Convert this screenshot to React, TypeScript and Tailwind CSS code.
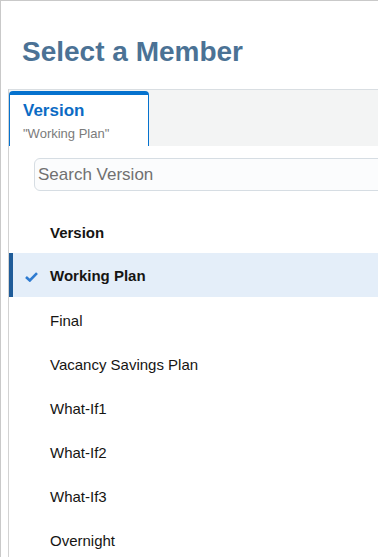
import React from "react";

const members = ["Final", "Vacancy Savings Plan", "What-If1", "What-If2", "What-If3", "Overnight"];

export default function App() {
  return (
    <div
      className="w-[378px] h-[557px] overflow-hidden bg-white border-t border-l border-[#c9c9c9] text-[#161513]"
      style={{ fontFamily: '"Liberation Sans", Arial, sans-serif' }}
    >
      {/* Title */}
      <h1 className="pt-[35px] pl-[21px] text-[28px] leading-[32px] font-bold text-[#4b7295] whitespace-nowrap">
        Select a Member
      </h1>

      {/* Panel */}
      <div className="ml-[7px] mt-[21px] w-[440px] border-l border-[#d2d2d2]">
        {/* Tab bar */}
        <div className="h-[57px] bg-[#f3f4f4] border-t border-[#d9dee2] pt-[1px]">
          <div className="w-[140px] h-[55px] bg-white border-t-4 border-x border-[#0572ce] rounded-t-[4px] pl-[13px] pt-[6px]">
            <div className="text-[17px] leading-[20px] font-bold text-[#0b6bc4]">Version</div>
            <div className="mt-[5px] text-[13px] leading-[16px] text-[#7b7b7b]">"Working Plan"</div>
          </div>
        </div>

        {/* Search */}
        <div className="ml-[25px] mt-[12px]">
          <input
            type="text"
            placeholder="Search Version"
            className="w-full h-[33px] rounded-[6px] border border-[#d6dde3] bg-[#fbfcfd] pl-[3px] text-[17px] outline-none placeholder:text-[#707070]"
          />
        </div>

        {/* List */}
        <div className="mt-[18px]">
          <div className="h-[44px] flex items-center pl-[41px] pt-[4px] text-[15px] font-bold">Version</div>

          <div className="h-[44px] flex items-center pt-[3px] border-l-4 border-[#1f5c99] bg-[#e4eef9]">
            <svg width="13" height="10" viewBox="0 0 13 10" className="ml-[12px]">
              <polyline points="1,5 4.8,8.5 12,1.2" fill="none" stroke="#2e7bd1" strokeWidth="2.6" />
            </svg>
            <span className="ml-[12px] text-[15px] font-bold">Working Plan</span>
          </div>

          {members.map((m) => (
            <div key={m} className="h-[44px] flex items-center pl-[41px] pt-[4px] text-[15px]">
              {m}
            </div>
          ))}
        </div>
      </div>
    </div>
  );
}
